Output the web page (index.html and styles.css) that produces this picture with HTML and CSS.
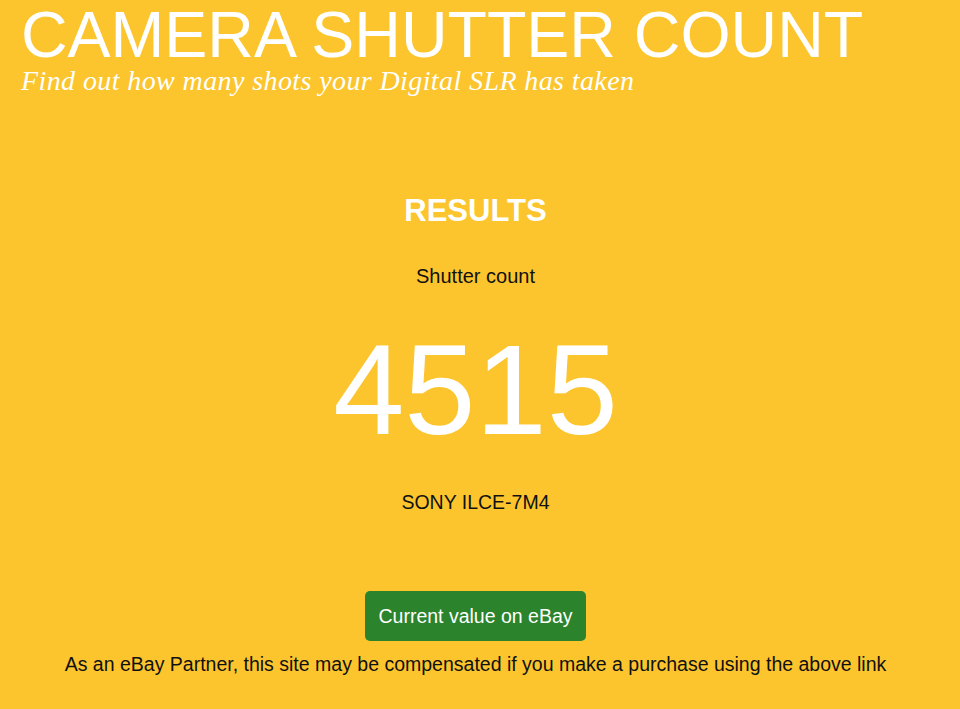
FILE: index.html
```html
<!DOCTYPE html>
<html lang="en">
  <head>
    <meta charset="UTF-8" />
    <meta name="viewport" content="width=device-width, initial-scale=1.0" />
    <title>Camera Shutter Count</title>
    <link rel="stylesheet" href="styles.css">
  </head>

  <body>
    <div class="header">
      <h1 class="title">CAMERA SHUTTER COUNT</h1>
      <p class="tagline">Find out how many shots your Digital SLR has taken</p>
    </div>

    <div class="results">
      <h2 class="results-heading">RESULTS</h2>
      <p class="label">Shutter count</p>
      <p class="count">4515</p>
      <p class="model">SONY ILCE-7M4</p>

      <a class="ebay-button" href="#">Current value on eBay</a>
      <p class="disclaimer">
        As an eBay Partner, this site may be compensated if you make a purchase using the above link
      </p>
    </div>
  </body>
</html>
```

FILE: styles.css
```css
* {
  font-family: "Liberation Sans", Arial, Helvetica, sans-serif;
}

body {
  margin: 0;
  background-color: #fcc52d;
  color: #111;
}

.header {
  padding: 3px 21px 0;
}

.title {
  margin: 0;
  font-size: 64.5px;
  line-height: 64px;
  font-weight: normal;
  color: white;
}

.tagline {
  margin: 0;
  font-family: "Liberation Serif", "Times New Roman", serif;
  font-style: italic;
  font-size: 28px;
  line-height: 28px;
  letter-spacing: 0.4px;
  color: white;
}

.results {
  display: flex;
  flex-direction: column;
  align-items: center;
  text-align: center;
  padding: 98px 9px 0 0;
}

.results-heading {
  margin: 0;
  font-size: 31px;
  line-height: 36px;
  font-weight: bold;
  color: white;
}

.label {
  margin: 35px 0 0;
  font-size: 20px;
  line-height: 24px;
}

.count {
  margin: 38px 0 0;
  font-size: 128px;
  line-height: 128px;
  color: white;
}

.model {
  margin: 36px 0 0;
  font-size: 19.5px;
  line-height: 24px;
}

.ebay-button {
  margin-top: 77px;
  display: flex;
  align-items: center;
  justify-content: center;
  width: 221px;
  height: 50px;
  border-radius: 5px;
  background-color: #2b832c;
  color: white;
  font-size: 19.5px;
  text-decoration: none;
}

.disclaimer {
  margin: 11px 0 0;
  font-size: 19.5px;
  line-height: 24px;
}
```
